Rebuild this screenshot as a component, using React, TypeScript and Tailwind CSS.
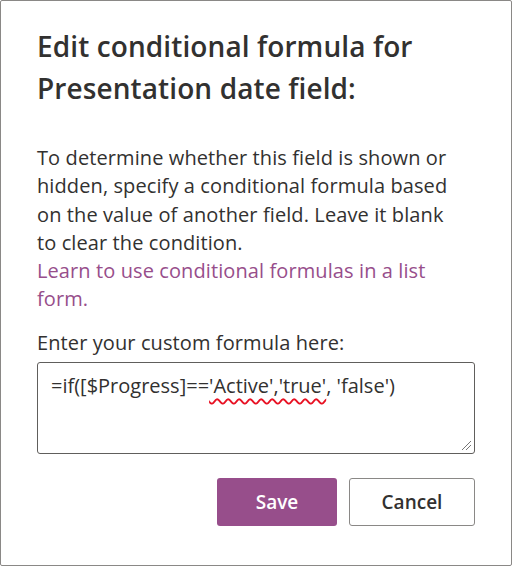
import React from "react";

export default function App() {
  const font = { fontFamily: '"Open Sans", "Noto Sans", sans-serif' };
  return (
    <div className="w-[512px] h-[566px] bg-white relative overflow-hidden" style={font}>
      <div className="w-[512px] h-[566px] border border-[#8a8886] rounded-[2px] bg-white flex flex-col text-[#323130]">
        <div className="pl-[36px] pt-[24px] w-[474px]">
          <h1 className="text-[28px] font-semibold leading-[42px] tracking-[0.1px]">
            Edit conditional formula for Presentation date field:
          </h1>
          <p className="mt-[35px] w-[422px] text-[20px] leading-[28.3px] tracking-[0.1px]">
            To determine whether this field is shown or hidden, specify a conditional formula based on the value of another field. Leave it blank to clear the condition.
            <br />
            <span className="text-[#974e8b]">Learn to use conditional formulas in a list form.</span>
          </p>
          <div className="mt-[15px] text-[20px] leading-[28px] tracking-[0.1px]">
            Enter your custom formula here:
          </div>
          <div className="mt-[5px] w-[438px] h-[92px] border border-[#605e5c] rounded-[3px] relative px-[13px] pt-[9px] text-[20px] leading-[28px]">
            <span>=if([$Progress]==</span>
            <span className="underline decoration-wavy decoration-[#e81123] decoration-[1.5px] underline-offset-[5px]">'Active','true'</span>
            <span>, 'false')</span>
            <svg className="absolute right-[2px] bottom-[2px]" width="11" height="11" viewBox="0 0 11 11">
              <line x1="10" y1="1" x2="1" y2="10" stroke="#767676" strokeWidth="1" />
              <line x1="10" y1="5" x2="5" y2="10" stroke="#767676" strokeWidth="1" />
            </svg>
          </div>
          <div className="mt-[24px] flex justify-end gap-[12px] w-[438px]">
            <button className="w-[120px] h-[48px] rounded-[3px] bg-[#974e8b] text-white text-[19px] font-semibold">
              Save
            </button>
            <button className="w-[126px] h-[48px] rounded-[3px] border border-[#8a8886] bg-white text-[#323130] text-[19px] font-semibold">
              Cancel
            </button>
          </div>
        </div>
      </div>
    </div>
  );
}
